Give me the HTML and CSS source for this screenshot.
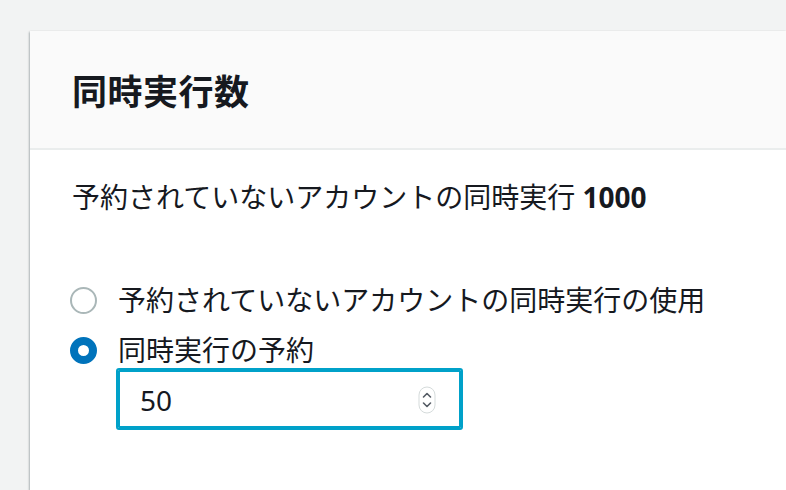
FILE: index.html
```html
<!DOCTYPE html>
<html lang="ja">
<head>
<meta charset="utf-8">
<link rel="stylesheet" href="styles.css">
</head>
<body>
<div class="page">
  <section class="card">
    <header class="card-header">
      <h2 class="card-title">同時実行数</h2>
    </header>
    <div class="card-body">
      <p class="summary">予約されていないアカウントの同時実行 <strong class="num">1000</strong></p>
      <div class="radio-group">
        <label class="radio-row">
          <span class="radio"></span>
          <span class="radio-label">予約されていないアカウントの同時実行の使用</span>
        </label>
        <label class="radio-row">
          <span class="radio checked"></span>
          <span class="radio-label">同時実行の予約</span>
        </label>
        <div class="input-box">
          <span class="input-value">50</span>
          <svg class="spinner" width="18" height="28" viewBox="0 0 18 28">
            <rect x="1" y="1" width="16" height="26" rx="8" fill="#fff" stroke="#d5dbdb" stroke-width="1"/>
            <path d="M5.5 11 L9 7.5 L12.5 11" fill="none" stroke="#545b64" stroke-width="1.6" stroke-linecap="round" stroke-linejoin="round"/>
            <path d="M5.5 17 L9 20.5 L12.5 17" fill="none" stroke="#545b64" stroke-width="1.6" stroke-linecap="round" stroke-linejoin="round"/>
          </svg>
        </div>
      </div>
    </div>
  </section>
</div>
</body>
</html>
```

FILE: styles.css
```css
html, body {
  margin: 0;
  padding: 0;
  width: 786px;
  height: 490px;
  overflow: hidden;
  background: #f2f3f3;
  font-family: "Noto Sans", "Noto Sans CJK JP", sans-serif;
  color: #16191f;
}

.page {
  box-sizing: border-box;
  width: 786px;
  height: 490px;
  padding: 31px 0 0 30px;
  display: flex;
}

.card {
  flex: 1;
  background: #fff;
  box-shadow: 0 1px 2px 0 rgba(0, 28, 36, 0.3), -1px 1px 2px 0 rgba(0, 28, 36, 0.18);
}

.card-header {
  height: 117px;
  background: #fafafa;
  border-bottom: 2px solid #eaeded;
  display: flex;
  align-items: center;
  padding: 0 42px;
}

.card-title {
  margin: 0;
  font-size: 35px;
  font-weight: 700;
  line-height: 1;
  font-family: "Noto Sans CJK JP", sans-serif;
  letter-spacing: 0.5px;
}

.card-body {
  padding: 26px 42px 0;
}

.summary {
  margin: 0;
  font-size: 28px;
  line-height: 42px;
}

.num {
  font-weight: 700;
}

.radio-group {
  margin-top: 62px;
  display: flex;
  flex-direction: column;
  gap: 10px;
}

.radio-row {
  display: flex;
  align-items: center;
  height: 40px;
  gap: 21px;
}

.radio {
  box-sizing: border-box;
  width: 27px;
  height: 27px;
  margin-left: -2px;
  border-radius: 50%;
  border: 2.5px solid #aab7b8;
  background: #fff;
}

.radio.checked {
  border: 8.5px solid #0073bb;
}

.radio-label {
  font-size: 28px;
  line-height: 40px;
}

.input-box {
  box-sizing: border-box;
  margin-left: 44px;
  margin-top: -12px;
  width: 347px;
  height: 62px;
  border: 2px solid #00a1c9;
  box-shadow: 0 0 0 2px #00a1c9 inset;
  border-radius: 3px;
  display: flex;
  align-items: center;
  justify-content: space-between;
  padding: 2px 25px 0 22px;
}

.input-value {
  font-size: 28px;
  line-height: 1;
}

.spinner {
  display: block;
}
```
